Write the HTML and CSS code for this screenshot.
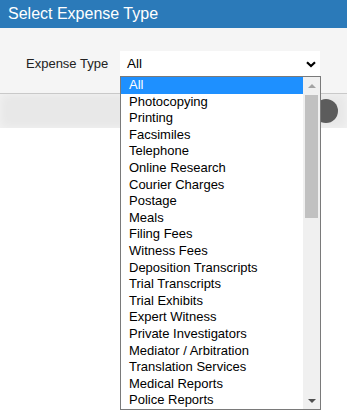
FILE: index.html
```html
<!DOCTYPE html>
<html lang="en">
<head>
    <meta charset="UTF-8">
    <meta name="viewport" content="width=device-width, initial-scale=1.0">
    <title>Select Expense Type</title>
    <link rel="stylesheet" href="styles.css">
</head>
<body>
    <header class="panel-title">Select Expense Type</header>

    <div class="filter-row">
        <label class="filter-label">Expense Type</label>
        <div class="select-wrap">
            <div class="select-box">
                <span>All</span>
                <svg class="chevron" width="10" height="7" viewBox="0 0 10 7">
                    <polyline points="1,1.2 5,5 9,1.2" fill="none" stroke="#000" stroke-width="2.2"/>
                </svg>
            </div>

            <!-- open dropdown list -->
            <div class="dropdown">
                <ul class="options">
                    <li class="selected">All</li>
                    <li>Photocopying</li>
                    <li>Printing</li>
                    <li>Facsimiles</li>
                    <li>Telephone</li>
                    <li>Online Research</li>
                    <li>Courier Charges</li>
                    <li>Postage</li>
                    <li>Meals</li>
                    <li>Filing Fees</li>
                    <li>Witness Fees</li>
                    <li>Deposition Transcripts</li>
                    <li>Trial Transcripts</li>
                    <li>Trial Exhibits</li>
                    <li>Expert Witness</li>
                    <li>Private Investigators</li>
                    <li>Mediator / Arbitration</li>
                    <li>Translation Services</li>
                    <li>Medical Reports</li>
                    <li>Police Reports</li>
                </ul>
                <div class="scrollbar">
                    <div class="arrow up"></div>
                    <div class="track"><div class="thumb"></div></div>
                    <div class="arrow down"></div>
                </div>
            </div>
        </div>
    </div>

    <div class="toolbar">
        <span class="toggle-dot"></span>
    </div>

    <div class="content"></div>
</body>
</html>
```

FILE: styles.css
```css
body {
    font-family: 'Liberation Sans', Arial, sans-serif;
    margin: 0;
    padding: 0;
    background-color: #fff;
    color: #000;
    min-height: 411px;
}

.panel-title {
    background-color: #2b7ab9;
    color: white;
    height: 28px;
    line-height: 27px;
    padding-left: 8px;
    font-size: 16px;
}

.filter-row {
    background-color: #f5f5f5;
    border-bottom: 1px solid #c9c9c9;
    display: flex;
    align-items: center;
    box-sizing: border-box;
    height: 66px;
    padding-top: 6px;
    position: relative;
    z-index: 2;
}

.filter-label {
    font-size: 13px;
    color: #222;
    margin-left: 26px;
    width: 94px;
}

.select-wrap {
    position: relative;
    width: 200px;
}

.select-box {
    background-color: white;
    height: 25px;
    display: flex;
    align-items: center;
    justify-content: space-between;
    padding: 0 4px 0 7px;
    font-size: 13.5px;
}

.chevron {
    margin-top: 1px;
}

.dropdown {
    position: absolute;
    top: 25px;
    left: 0;
    width: 201px;
    height: 334px;
    border: 1px solid #7a7a7a;
    box-sizing: border-box;
    background-color: white;
    display: flex;
}

.options {
    list-style: none;
    margin: 0;
    padding: 0;
    flex: 1;
}

.options li {
    height: 16.6px;
    line-height: 16.6px;
    padding-left: 8px;
    font-size: 13px;
    white-space: nowrap;
}

.options li.selected {
    background-color: #1e90ff;
    color: white;
}

.scrollbar {
    width: 17px;
    background-color: #f0f0f0;
    display: flex;
    flex-direction: column;
}

.arrow {
    height: 17px;
    display: flex;
    align-items: center;
    justify-content: center;
}

.arrow::before {
    content: "";
    border-left: 4px solid transparent;
    border-right: 4px solid transparent;
}

.arrow.up::before {
    border-bottom: 4px solid #a3a3a3;
}

.arrow.down::before {
    border-top: 4px solid #505050;
}

.track {
    flex: 1;
    padding: 1px 2px 0;
}

.thumb {
    background-color: #c1c1c1;
    height: 123px;
}

.toolbar {
    background-color: #e8e8e8;
    height: 34px;
    display: flex;
    align-items: center;
    justify-content: flex-end;
    box-shadow: inset 0 0 10px rgba(255, 255, 255, 0.5);
}

.toggle-dot {
    width: 24px;
    height: 24px;
    border-radius: 50%;
    background-color: #5c5c5c;
    margin-right: 9px;
}

.content {
    height: 283px;
}
```
